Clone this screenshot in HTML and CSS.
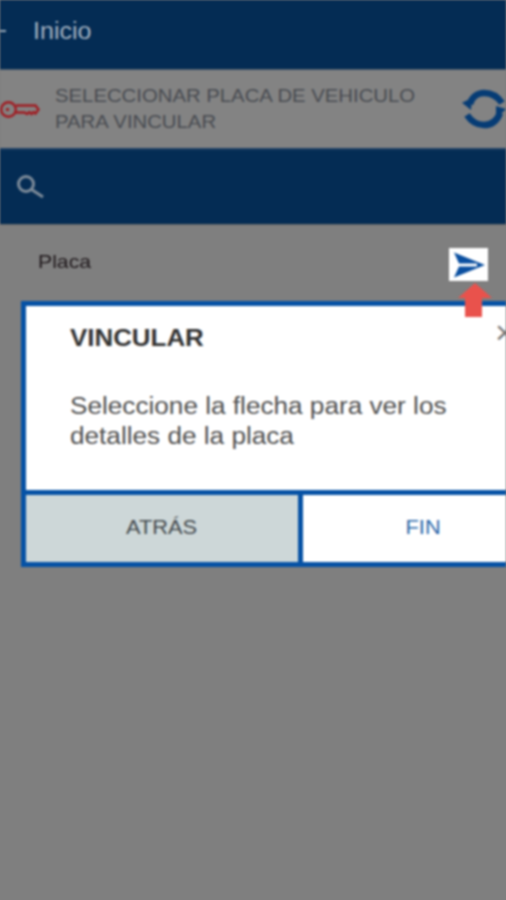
FILE: index.html
```html
<!DOCTYPE html>
<html lang="es">
<head>
<meta charset="utf-8">
<title>Vincular</title>
<link rel="stylesheet" href="styles.css">
</head>
<body>
<div class="app">
  <header class="topbar">
    <span class="back-stub"></span>
    <span class="topbar-title">Inicio</span>
  </header>
  <section class="band">
    <svg class="key" viewBox="0 0 40 20" width="40" height="20" fill="none" stroke="#a01c22" stroke-width="2.400">
      <circle cx="8.500" cy="10.500" r="7.300"/>
      <circle cx="7.500" cy="10.500" r="1.700" fill="#a01c22" stroke="none"/>
      <path d="M16 6.500H35.500L38.500 10.500L35.500 14.500L33.500 13L31.500 15L29.500 13L27 15L24.500 13.500H16"/>
    </svg>
    <p class="band-text">SELECCIONAR PLACA DE VEHICULO<br>PARA VINCULAR</p>
    <svg class="sync" viewBox="0 0 44 40" width="44" height="40" fill="none">
      <path d="M8 15C10 8 15.500 4 22 4C30 4 36 8 40 14" stroke="#063c75" stroke-width="6.500"/>
      <path d="M0 13.700L10 9L9 21Z" fill="#063c75"/>
      <path d="M38 24C35 32 29 36 22 36C15 36 9 32 5 26" stroke="#063c75" stroke-width="6.500"/>
      <path d="M44 20L34 30L34 17Z" fill="#063c75"/>
    </svg>
  </section>
  <section class="search">
    <svg viewBox="0 0 30 30" width="30" height="30" fill="none" stroke="#7e8c9a" stroke-width="3">
      <circle cx="12" cy="12" r="7.500"/>
      <path d="M17.500 17.500L29 25"/>
    </svg>
  </section>
  <section class="list-row">
    <span class="plate-label">Placa</span>
  </section>
</div>

<div class="send-tile">
  <svg viewBox="0 0 36 28" width="36" height="28">
    <path d="M3 1.500L34 14L3 26.500L8 15.500H26V12.500H8Z" fill="#0a4fa0"/>
  </svg>
</div>
<svg class="pointer" viewBox="0 0 34 36" width="34" height="36">
  <path d="M17 0L34 15H24V34H7V15H0Z" fill="#e9524c"/>
</svg>

<div class="dialog">
  <div class="dialog-body">
    <h2 class="dialog-title">VINCULAR</h2>
    <p class="dialog-text">Seleccione la flecha para ver los<br>detalles de la placa</p>
    <span class="dialog-close">×</span>
  </div>
  <div class="dialog-actions">
    <span class="btn btn-back"><span class="btn-label">ATRÁS</span></span>
    <span class="btn btn-end"><span class="btn-label">FIN</span></span>
  </div>
</div>
</body>
</html>
```
FILE: styles.css
```css
html, body {
  margin: 0;
  height: 100%;
  overflow: hidden;
}
body {
  position: relative;
  width: 506px;
  height: 900px;
  background: #7f7f7f;
  font-family: "Liberation Sans", Arial, sans-serif;
  filter: blur(0.8px);
}
.app {
  display: flex;
  flex-direction: column;
}
.topbar {
  height: 62px;
  padding-bottom: 7px;
  background: #042c54;
  display: flex;
  align-items: center;
  gap: 27px;
  border-bottom: 1px solid #4a5a6a;
}
.back-stub {
  width: 6px;
  height: 2px;
  background: #9aa9b8;
}
.topbar-title {
  font-size: 23px;
  color: #a3b2c1;
  transform: scaleX(1.09);
  transform-origin: left center;
}
.band {
  height: 78px;
  background: #838383;
  display: flex;
  align-items: center;
  border-bottom: 2px solid #1c3f64;
}
.key {
  flex: none;
}
.band-text {
  margin: 0 0 0 15px;
  flex: 1;
  font-size: 18.500px;
  line-height: 26px;
  color: #484b51;
  transform: scaleX(1.098);
  transform-origin: left center;
}
.sync {
  flex: none;
}
.search {
  height: 74px;
  background: #042c54;
  display: flex;
  align-items: center;
  padding-left: 14px;
  border-bottom: 1px solid #666;
}
.list-row {
  height: 72px;
  padding: 26px 0 0 38px;
  display: flex;
  align-items: flex-start;
  box-sizing: border-box;
}
.plate-label {
  font-size: 19px;
  line-height: 22px;
  color: #1f181b;
  transform: scaleX(1.116);
  transform-origin: left center;
}
.send-tile {
  position: absolute;
  left: 449px;
  top: 248px;
  width: 39px;
  height: 33px;
  background: #fff;
  display: flex;
  align-items: center;
  justify-content: center;
}
.pointer {
  position: absolute;
  left: 458px;
  top: 283px;
  z-index: 2;
}
.dialog {
  position: absolute;
  left: 21px;
  top: 301px;
  width: 527px;
  border: 5px solid #0652a5;
  background: #fff;
  box-sizing: border-box;
}
.dialog-body {
  position: relative;
  height: 184px;
  padding: 19px 0 0 44px;
  box-sizing: border-box;
}
.dialog-title {
  margin: 0;
  font-size: 23px;
  line-height: 27px;
  font-weight: 700;
  color: #333;
  transform: scaleX(1.126);
  transform-origin: left center;
}
.dialog-text {
  margin: 39px 0 0;
  font-size: 23px;
  line-height: 30px;
  color: #505050;
  transform: scaleX(1.137);
  transform-origin: left center;
}
.dialog-close {
  position: absolute;
  left: 469px;
  top: 8px;
  font-size: 34px;
  line-height: 36px;
  color: #777;
}
.dialog-actions {
  display: grid;
  grid-template-columns: 277px 1fr;
  height: 67px;
  border-top: 5px solid #0652a5;
}
.btn {
  display: flex;
  align-items: center;
  justify-content: center;
  padding-bottom: 2px;
}
.btn-label {
  font-size: 20px;
  transform: scaleX(1.09);
}
.btn-back {
  background: #cdd7d8;
  color: #454b4f;
  border-right: 5px solid #0652a5;
}
.btn-end {
  background: #fff;
  color: #2a66a8;
}
```
